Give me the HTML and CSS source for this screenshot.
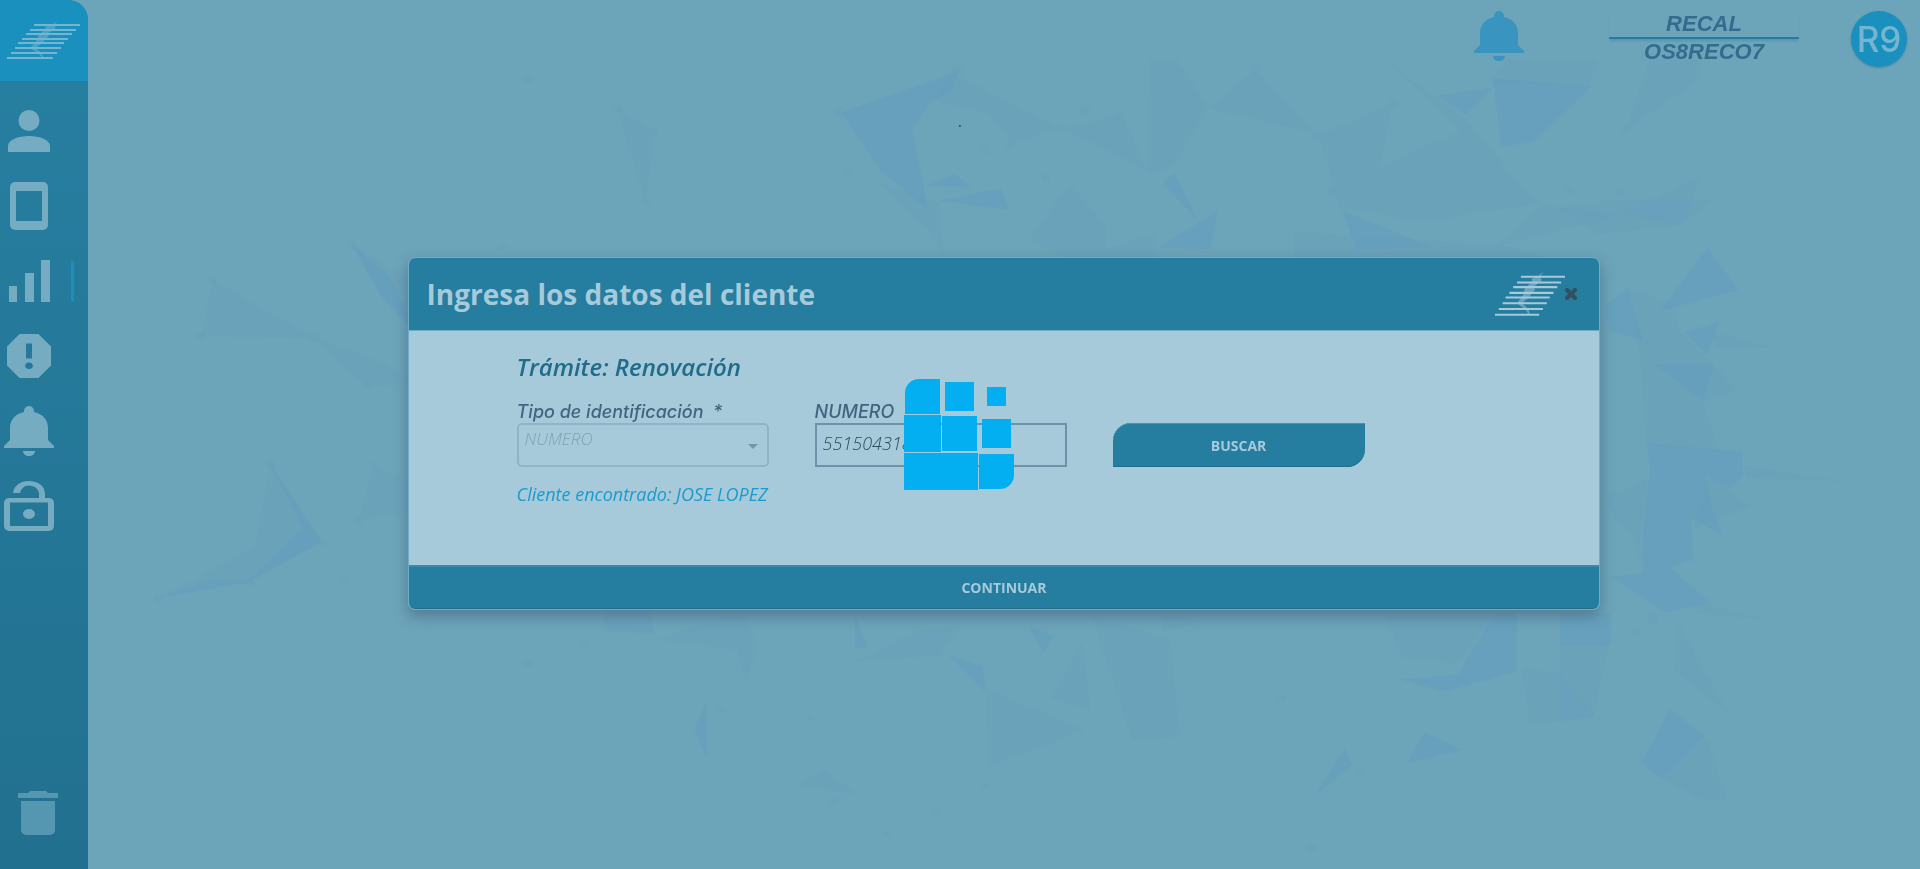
FILE: index.html
```html
<!DOCTYPE html>
<html lang="es">
<head>
<meta charset="utf-8">
<title>Ingresa los datos del cliente</title>
<link rel="stylesheet" href="styles.css">
</head>
<body>
<svg class="defs" aria-hidden="true">
  <symbol id="logo" viewBox="0 0 73 40" preserveAspectRatio="none">
    <g fill="none" stroke="currentColor" stroke-width="1.800">
      <path d="M27 5H73M23 10H69M19 14H65M15 19H61M11 23H57M8 28H54M4 33H50M0 38H46"/>
    </g>
    <path fill="currentColor" opacity=".5" d="M51 0 47 5 49 8 40 14 42 16 34 24 28 28 35 33 37 40 32 34 23 28 30 20 31 15 39 9 38 7 46 4Z"/>
  </symbol>
  <symbol id="bell" viewBox="0 0 50 50">
    <path d="M20 6V5A5 5 0 0 1 30 5V6C39 8 44 14 44 22V34L50 40V42H0V40L6 34V22C6 14 11 8 20 6ZM19 45H31C31 48 28 50 25 50S19 48 19 45Z"/>
  </symbol>
</svg>

<svg class="backdrop" viewBox="0 0 1920 869" preserveAspectRatio="xMidYMid slice" aria-hidden="true">
  <g transform="translate(800 50) scale(.574 .3333)">
    <path class="deep" d="M72 188 182 120 275 65 262 130 230 150 195 240 215 405 222 480 140 360ZM218 410 270 372 298 412ZM240 452 350 415 366 480ZM625 592 728 482 715 598ZM1110 136 1207 115 1160 195ZM1207 85 1380 108 1278 275 1222 290ZM632 400 652 370 692 510ZM945 482 1100 590 970 600Z"/>
    <path class="soft" d="M262 65 452 235 370 280 330 190 235 150ZM610 28H655L710 170 650 350 605 375ZM710 175 793 60 900 250ZM460 235 560 195 605 360ZM905 255 1030 165 1010 350 1155 240 1290 460 1080 515 940 470ZM400 570 470 405 535 530 530 600 620 545V620H460ZM1020 28 1160 210 1240 370 1150 240ZM1230 28H1390L1375 105H1200ZM1480 28H1568V90L1440 235ZM1215 585 1290 465 1540 520 1568 380 1420 500ZM860 545 1220 585 1300 620H860ZM140 400 225 540 250 620 240 455Z"/>
    <g class="soft"><ellipse cx="72" cy="185" rx="10" ry="16"/><ellipse cx="275" cy="60" rx="9" ry="14"/><ellipse cx="497" cy="182" rx="10" ry="16"/><ellipse cx="558" cy="198" rx="8" ry="14"/><ellipse cx="453" cy="235" rx="8" ry="14"/><ellipse cx="366" cy="286" rx="8" ry="14"/><ellipse cx="322" cy="299" rx="8" ry="14"/><ellipse cx="84" cy="362" rx="8" ry="14"/><ellipse cx="428" cy="385" rx="8" ry="14"/><ellipse cx="793" cy="57" rx="8" ry="14"/><ellipse cx="900" cy="257" rx="8" ry="14"/><ellipse cx="1034" cy="160" rx="8" ry="16"/><ellipse cx="926" cy="425" rx="8" ry="14"/><ellipse cx="1340" cy="420" rx="8" ry="14"/><ellipse cx="1427" cy="430" rx="8" ry="14"/><ellipse cx="1440" cy="238" rx="7" ry="13"/></g>
    <path class="speck" d="M277 225H280V231H277Z"/>
  </g>
  <g transform="translate(1560 200) scale(.3333 .3827)">
    <path class="deep" d="M443 125 535 235 300 290ZM375 345 478 318 440 405ZM285 430H462L428 525ZM260 635 545 658 550 720 510 755 440 720 455 800 485 875 395 830 400 940 330 960 450 1052 315 1078 150 985 250 975 250 880 270 700ZM330 1330 435 1400 305 1515 245 1470ZM0 1080H152V1165H0ZM130 280 200 230 250 370 150 340Z"/>
    <path class="soft" d="M0 20 160 0H460L360 65 110 90ZM200 230 330 270 360 345 530 495 425 530 480 660 260 640 240 400ZM455 345 630 385 470 385ZM550 695 850 735 560 725ZM450 720 570 800 400 860ZM350 1100 500 1335 345 1230ZM400 1430 440 1405 500 1568H430L310 1515ZM0 1165H145L100 1350 0 1360ZM130 780 260 730 260 980 220 890ZM400 1050 610 1095 410 1080Z"/>
    <circle class="soft" cx="278" cy="1092" r="15"/><circle class="soft" cx="230" cy="1128" r="10"/>
  </g>
  <g transform="translate(90 50) scale(.3827)">
    <path class="soft" d="M1376 150 1472 213 1453 395ZM323 603 588 753 290 748ZM588 753 760 815 850 870 725 880 660 825ZM472 1080 605 1285 415 1390ZM180 1432 430 1300 550 1230 605 1285 415 1392 300 1385ZM743 1085 850 1135V1200L700 1230ZM682 505 850 610V740L760 640ZM1350 1460H1460L1475 1525 1340 1510Z"/>
    <path class="deep" d="M682 505 780 590 850 730 765 650ZM472 1085 605 1285 550 1235ZM605 1285 415 1388 555 1245ZM180 1432 310 1385 415 1390Z"/>
    <g class="soft"><circle cx="1146" cy="76" r="12"/><circle cx="1376" cy="152" r="12"/><circle cx="1472" cy="213" r="12"/><circle cx="1453" cy="395" r="12"/><circle cx="1075" cy="512" r="11"/><circle cx="682" cy="505" r="12"/><circle cx="323" cy="603" r="10"/><circle cx="290" cy="748" r="12"/><circle cx="588" cy="753" r="13"/><circle cx="725" cy="878" r="11"/><circle cx="472" cy="1080" r="12"/><circle cx="743" cy="1085" r="11"/><circle cx="605" cy="1285" r="12"/><circle cx="700" cy="1230" r="11"/><circle cx="663" cy="1385" r="12"/><circle cx="415" cy="1390" r="12"/><circle cx="180" cy="1432" r="13"/></g>
  </g>
  <g transform="translate(520 600) scale(.765 .3333)">
    <path class="deep" d="M243 310 228 385 244 475ZM438 50V145L455 142ZM665 80 697 105 684 160ZM560 165 605 200 608 275ZM1078 445 1088 495 1040 585ZM1182 397 1233 450 1160 490ZM1150 238 1225 225 1275 40H1303V215L1207 275Z"/>
    <path class="soft" d="M610 270 738 390 612 500ZM440 185 520 90 575 80 550 165ZM1130 40H1275L1225 190 1155 175ZM1310 205 1360 220 1405 350 1320 375ZM750 50 850 120 862 410 800 420ZM180 120 290 30 310 140 295 245 285 150ZM397 510 362 558 440 582ZM735 130 745 330 695 295ZM755 110H785L860 410H805ZM112 35H168L175 105 112 90ZM840 30 895 70 840 90Z"/>
    <g class="soft"><ellipse cx="84" cy="129" rx="5" ry="11"/><ellipse cx="10" cy="190" rx="6" ry="12"/><ellipse cx="262" cy="330" rx="5" ry="12"/><ellipse cx="410" cy="606" rx="6" ry="13"/><ellipse cx="543" cy="636" rx="5" ry="11"/><ellipse cx="480" cy="700" rx="4" ry="11"/><ellipse cx="1034" cy="745" rx="6" ry="14"/><ellipse cx="995" cy="295" rx="6" ry="12"/><ellipse cx="1098" cy="518" rx="6" ry="12"/><ellipse cx="380" cy="355" rx="4" ry="10"/><ellipse cx="607" cy="555" rx="4" ry="11"/></g>
  </g>
</svg>

<div class="shell">
  <aside class="sidebar">
    <a class="brand" href="#" aria-label="Inicio"><svg class="brand-logo"><use href="#logo"/></svg></a>
    <nav class="menu">
      <a class="item" href="#" aria-label="Clientes"><svg class="icon" viewBox="0 0 50 50"><circle cx="25" cy="14.5" r="10.5"/><path d="M4 46V40C4 34 14 30 25 30S46 34 46 40V46Z"/></svg></a>
      <a class="item" href="#" aria-label="Equipos"><svg class="icon" viewBox="0 0 50 50"><path fill-rule="evenodd" d="M11 1H39A5 5 0 0 1 44 6V44A5 5 0 0 1 39 49H11A5 5 0 0 1 6 44V6A5 5 0 0 1 11 1ZM12 10V40H38V10Z"/></svg></a>
      <a class="item active" href="#" aria-label="Reportes" aria-current="page"><svg class="icon" viewBox="0 0 50 50"><path d="M5 30H13V46H5ZM21 17H30V46H21ZM37 4H46V46H37Z"/></svg></a>
      <a class="item" href="#" aria-label="Avisos"><svg class="icon" viewBox="0 0 50 50"><path fill-rule="evenodd" d="M15.500 3H34.500L47 15.500V34.500L34.500 47H15.500L3 34.500V15.500ZM22 12.500V27.500H28V12.500ZM25 31.500A3.300 3.300 0 1 0 25 38A3.300 3.300 0 1 0 25 31.500Z"/></svg></a>
      <a class="item" href="#" aria-label="Notificaciones"><svg class="icon"><use href="#bell"/></svg></a>
      <a class="item" href="#" aria-label="Desbloquear"><svg class="icon" viewBox="0 0 50 50"><path fill-rule="evenodd" d="M5 17H35V13C35 8 30 4.500 25 4.500C20 4.500 17 8 16 12H9C10 4 17 0 25 0C34 0 41 5 41 13V17H45A5 5 0 0 1 50 22V45A5 5 0 0 1 45 50H5A5 5 0 0 1 0 45V22A5 5 0 0 1 5 17ZM6 21.500V45H44V21.500Z"/><ellipse cx="25" cy="33" rx="6" ry="5"/></svg></a>
    </nav>
    <button class="trash" type="button" aria-label="Eliminar"><svg class="trash-icon" viewBox="0 0 40 44"><path d="M0 2H10L12 0H28L30 2H40V7H0ZM3 10H37V39A5 5 0 0 1 32 44H8A5 5 0 0 1 3 39Z"/></svg></button>
  </aside>

  <main class="main">
    <header class="topbar">
      <button class="alerts" type="button" aria-label="Notificaciones"><svg class="icon"><use href="#bell"/></svg></button>
      <div class="account"><span class="account-name">RECAL</span><span class="account-user">OS8RECO7</span></div>
      <div class="avatar">R9</div>
    </header>

    <div class="overlay">
      <section class="modal" role="dialog" aria-labelledby="modal-title">
        <header class="modal-head">
          <h1 class="modal-title" id="modal-title">Ingresa los datos del cliente</h1>
          <svg class="modal-logo"><use href="#logo"/></svg>
          <button class="close" type="button" aria-label="Cerrar"><svg class="close-icon" viewBox="0 0 12 12"><path d="M2 2 10 10M10 2 2 10"/></svg></button>
        </header>
        <form class="modal-body">
          <h2 class="procedure">Trámite: Renovación</h2>
          <div class="fields">
            <div class="field">
              <label class="label" for="tipo">Tipo de identificación &nbsp;*</label>
              <div class="select-wrap">
                <select class="select" id="tipo" disabled><option>NUMERO</option></select>
                <svg class="caret" viewBox="0 0 10 5"><path d="M0 0H10L5 5Z"/></svg>
              </div>
            </div>
            <div class="field">
              <label class="label" for="numero">NUMERO</label>
              <input class="input" id="numero" type="text" value="551504318">
            </div>
            <button class="search" type="button">BUSCAR</button>
          </div>
          <p class="result">Cliente encontrado: JOSE LOPEZ</p>
        </form>
        <button class="continue" type="button">CONTINUAR</button>
      </section>
    </div>
  </main>
</div>

<div class="loader" role="status" aria-label="Cargando">
  <svg class="loader-grid" viewBox="0 0 112 112">
    <path d="M1 36V15A14 14 0 0 1 15 1H36V36ZM41 4H70V33H41ZM83 9H102V28H83ZM0 37H37V74H0ZM38 38H73V73H38ZM78 41H107V70H78ZM0 75H74V112H0ZM75 76H110V97A14 14 0 0 1 96 111H75Z"/>
  </svg>
</div>
</body>
</html>
```
FILE: styles.css
```css
* { box-sizing: border-box; }

body {
  margin: 0;
  background: #6ca4b9;
  font-family: "Open Sans", "Noto Sans", sans-serif;
  color: #42657f;
}

button {
  border: 0;
  padding: 0;
  background: none;
  font: inherit;
  cursor: pointer;
}

svg { display: block; }

.defs { position: absolute; width: 0; height: 0; }

.backdrop {
  position: fixed;
  inset: 0;
  width: 100%;
  height: 100%;
}
.deep { fill: #5f9cc0; opacity: .4; }
.soft { fill: #659cbd; opacity: .2; }
.speck { fill: #35586a; }

.shell {
  position: relative;
  display: flex;
  min-height: 100vh;
}

/* Sidebar */
.sidebar {
  display: flex;
  flex-direction: column;
  width: 88px;
  border-top-right-radius: 20px;
  overflow: hidden;
  background: linear-gradient(#2780a2, #22708f);
}
.brand {
  display: flex;
  align-items: center;
  height: 81px;
  padding: 0 8px 2px 7px;
  background: #1a90be;
  color: #75b5cf;
}
.brand-logo { width: 73px; height: 40px; }
.menu {
  display: flex;
  flex-direction: column;
  padding-top: 12px;
}
.item {
  display: flex;
  align-items: center;
  justify-content: space-between;
  height: 75px;
  padding: 0 14px 0 4px;
}
.icon { width: 50px; height: 50px; fill: #75acc2; }
.active::after {
  content: "";
  width: 3px;
  height: 40px;
  background: #1a90be;
}
.trash { margin: auto 0 34px 18px; width: 40px; }
.trash-icon { width: 40px; height: 44px; fill: #5596b1; }

/* Top bar */
.main { flex: 1; position: relative; }
.topbar {
  display: flex;
  justify-content: flex-end;
  align-items: flex-start;
  padding: 11px 13px 0;
}
.alerts .icon { fill: #3995bf; }
.account {
  display: flex;
  flex-direction: column;
  width: 190px;
  margin: 0 52px 0 85px;
  font: italic bold 22px/26px "Liberation Sans", Arial, sans-serif;
  text-align: center;
  color: #346c8e;
}
.account-name {
  border-bottom: 2px solid #257d9f;
  box-shadow: 0 3px 2px -1px rgba(50, 100, 130, .25);
}
.avatar {
  width: 56px;
  height: 56px;
  border-radius: 50%;
  background: #1a90be;
  box-shadow: 0 1px 2px rgba(30, 90, 120, .4);
  color: #75b5cf;
  font: 500 35px/56px Inter, sans-serif;
  text-align: center;
}

/* Modal */
.overlay {
  position: absolute;
  inset: 0;
  display: flex;
  align-items: center;
  justify-content: center;
  padding-bottom: 2px;
  pointer-events: none;
}
.modal {
  box-sizing: content-box;
  width: 65%;
  border: 1px solid #6fadc4;
  border-radius: 7px;
  overflow: hidden;
  background: #a7cada;
  box-shadow: 0 6px 14px rgba(60, 90, 115, .55);
  pointer-events: auto;
}
.modal-head {
  display: flex;
  align-items: center;
  height: 73px;
  padding: 0 22px 0 18px;
  border-bottom: 1px solid #6fadc4;
  background: #257d9f;
}
.modal-title {
  margin: 0 auto 0 0;
  font-size: 28px;
  font-weight: 700;
  color: #a7cada;
}
.modal-logo { width: 70px; height: 46px; color: #a7cada; }
.close-icon {
  width: 12px;
  height: 12px;
  fill: none;
  stroke: #33505f;
  stroke-width: 4;
  stroke-linecap: round;
}
.modal-body { padding: 20px 108px 60px; }
.procedure {
  margin: 0 0 18px;
  font-size: 24px;
  line-height: 32px;
  font-weight: 600;
  font-style: italic;
  color: #206c8a;
}
.fields {
  display: grid;
  grid-template-columns: repeat(3, minmax(0, 252px));
  column-gap: 46px;
  align-items: end;
}
.label {
  display: block;
  font: italic 500 18px/22px Inter, sans-serif;
  color: #42657f;
}
.select-wrap { position: relative; }
.select, .input {
  display: block;
  width: 100%;
  height: 44px;
  background: transparent;
  font: italic 300 17px/22px "Open Sans", sans-serif;
}
.select {
  appearance: none;
  padding: 0 30px 12px 6px;
  border: 2px solid #8eb5c7;
  border-radius: 5px;
  color: #7ea3b6;
  opacity: 1;
}
.caret {
  position: absolute;
  right: 11px;
  top: 21px;
  width: 10px;
  height: 5px;
  fill: #7098ab;
}
.input {
  padding: 0 6px 4px;
  border: 2px solid #6d93aa;
  font-size: 18px;
  color: #2c4e60;
}
.search {
  height: 44px;
  border-radius: 18px 0;
  background: #257d9f;
  box-shadow: inset 0 1px #4a92ae, inset 0 -1px #206c8a;
  font-size: 14px;
  font-weight: 700;
  color: #a7cada;
}
.result {
  margin: 16px 0 0;
  font-size: 18px;
  line-height: 22px;
  font-style: italic;
  color: #1a9bd0;
}
.continue {
  display: block;
  width: 100%;
  height: 44px;
  background: #257d9f;
  box-shadow: inset 0 2px #3a8aa9, inset 0 -1px #206c8a;
  font-size: 14px;
  font-weight: 700;
  color: #a7cada;
}

/* Loader */
.loader {
  position: fixed;
  inset: 0;
  display: flex;
  align-items: center;
  justify-content: center;
  padding-bottom: 2px;
}
.loader-grid {
  width: 112px;
  height: 112px;
  fill: #03aff0;
}
```
